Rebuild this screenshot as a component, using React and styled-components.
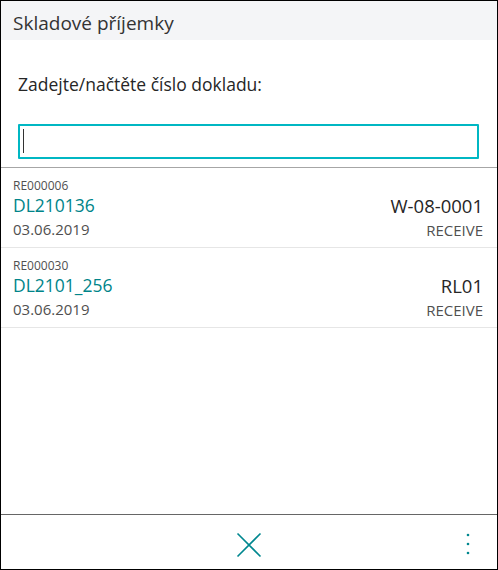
import styled, { createGlobalStyle } from 'styled-components';

const GlobalStyle = createGlobalStyle`
	html, body {
		margin: 0;
		padding: 0;
		background: #ffffff;
	}
	* {
		box-sizing: border-box;
	}
`;

const Frame = styled.div`
	width: 498px;
	height: 570px;
	border: 1px solid #000000;
	display: flex;
	flex-direction: column;
	font-family: 'Open Sans', 'Noto Sans', sans-serif;
	color: #262626;
	background: #ffffff;
`;

const Header = styled.header`
	height: 39px;
	background: #f4f5f7;
	padding: 4px 12px 0;
	display: flex;
	align-items: center;
	font-size: 19px;
	color: #333333;
`;

const Prompt = styled.div`
	padding: 32px 17px 0;
	font-size: 17.5px;
	color: #262626;
`;

const Field = styled.div`
	padding: 28px 18px 8px 17px;
	border-bottom: 1px solid #a6a6a6;
`;

const InputWrap = styled.div`
	position: relative;
`;

const Input = styled.input`
	display: block;
	width: 100%;
	height: 35px;
	border: 2px solid #00b7c3;
	border-radius: 1px;
	padding: 0 4px;
	font-family: inherit;
	font-size: 16px;
	outline: none;
	caret-color: transparent;
`;

const Caret = styled.span`
	position: absolute;
	left: 5px;
	top: 5px;
	width: 1px;
	height: 24px;
	background: #333333;
	pointer-events: none;
`;

const List = styled.ul`
	flex: 1;
	margin: 0;
	padding: 0;
	list-style: none;
`;

const Item = styled.li`
	height: 80px;
	padding: 10px 14px 0 12px;
	border-bottom: 1px solid #e6e6e6;
	display: flex;
	justify-content: space-between;
`;

const Col = styled.div`
	display: flex;
	flex-direction: column;
	align-items: ${(p) => (p.$right ? 'flex-end' : 'flex-start')};
	padding-top: ${(p) => (p.$right ? '16px' : '0')};
`;

const Number = styled.span`
	font-size: 12px;
	line-height: 15px;
	color: #505050;
`;

const DocNo = styled.span`
	font-size: 17.5px;
	line-height: 24px;
	color: #008489;
`;

const Code = styled.span`
	font-size: 18.5px;
	line-height: 24px;
	color: #262626;
`;

const Meta = styled.span`
	font-size: 15px;
	line-height: 20px;
	margin-top: 2px;
	color: #505050;
`;

const Footer = styled.footer`
	height: 55px;
	border-top: 1px solid #666666;
	display: grid;
	grid-template-columns: 1fr auto 1fr;
	align-items: center;
`;

const IconButton = styled.button`
	background: none;
	border: none;
	padding: 0;
	cursor: pointer;
	display: flex;
	align-items: center;
	justify-content: center;
	justify-self: ${(p) => p.$align || 'center'};
	margin: ${(p) => p.$margin || '0'};
	color: #00878f;
`;

const documents = [
	{ no: 'RE000006', doc: 'DL210136', date: '03.06.2019', code: 'W-08-0001', type: 'RECEIVE' },
	{ no: 'RE000030', doc: 'DL2101_256', date: '03.06.2019', code: 'RL01', type: 'RECEIVE' },
];

const App = () => (
	<>
		<GlobalStyle />
		<Frame>
			<Header>Skladové příjemky</Header>
			<Prompt>Zadejte/načtěte číslo dokladu:</Prompt>
			<Field>
				<InputWrap>
					<Input />
					<Caret />
				</InputWrap>
			</Field>
			<List>
				{documents.map((d) => (
					<Item key={d.no}>
						<Col>
							<Number>{d.no}</Number>
							<DocNo>{d.doc}</DocNo>
							<Meta>{d.date}</Meta>
						</Col>
						<Col $right>
							<Code>{d.code}</Code>
							<Meta>{d.type}</Meta>
						</Col>
					</Item>
				))}
			</List>
			<Footer>
				<span />
				<IconButton aria-label='Zavřít' $margin='5px 0 0 0'>
					<svg width='26' height='26' viewBox='0 0 26 26'>
						<path d='M1.5 1.5 L24.5 24.5 M24.5 1.5 L1.5 24.5' stroke='currentColor' strokeWidth='1.6' fill='none' />
					</svg>
				</IconButton>
				<IconButton aria-label='Další' $align='end' $margin='3px 26px 0 0'>
					<svg width='6' height='24' viewBox='0 0 6 24'>
						<circle cx='3' cy='3' r='1.3' fill='currentColor' />
						<circle cx='3' cy='12' r='1.3' fill='currentColor' />
						<circle cx='3' cy='21' r='1.3' fill='currentColor' />
					</svg>
				</IconButton>
			</Footer>
		</Frame>
	</>
);

export default App;
